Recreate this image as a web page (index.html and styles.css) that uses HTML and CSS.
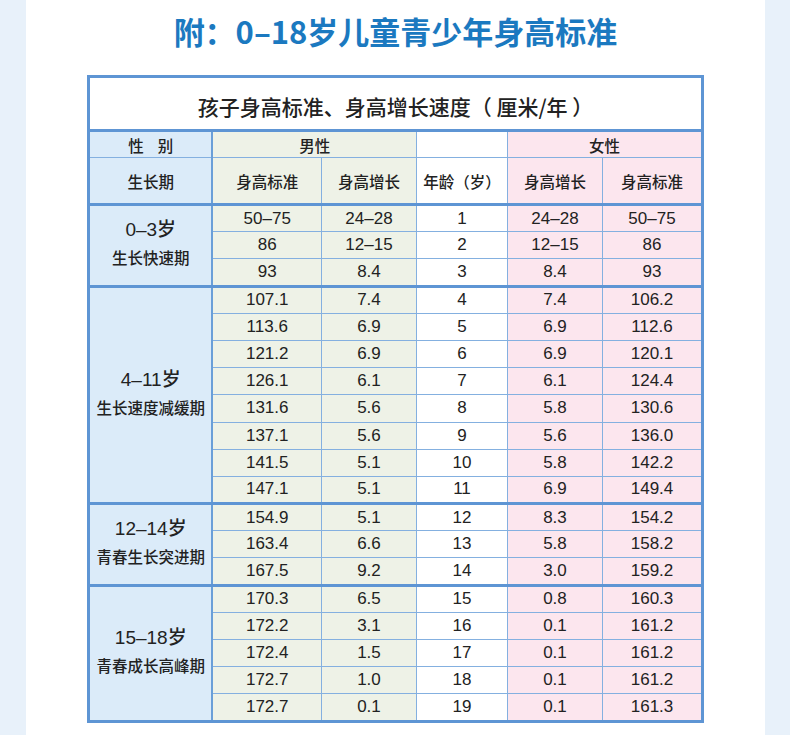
FILE: index.html
```html
<!DOCTYPE html>
<html lang="zh">
<head>
<meta charset="utf-8">
<link rel="stylesheet" href="styles.css">
</head>
<body>
<div class="page">
  <div class="panel">
    <h1 class="title">附：0–18岁儿童青少年身高标准</h1>
    <table class="grid">
      <colgroup>
        <col class="c1"><col class="c2"><col class="c3"><col class="c4"><col class="c5"><col class="c6">
      </colgroup>
      <tr class="cap-row"><td colspan="6" class="cap">孩子身高标准、身高增长速度（ 厘米/年 ）</td></tr>
      <tr class="h1-row">
        <td class="lab hd">性&nbsp;&nbsp;&nbsp;&nbsp;别</td>
        <td colspan="2" class="m hd">男性</td>
        <td class="a"></td>
        <td colspan="2" class="f hd">女性</td>
      </tr>
      <tr class="h2-row">
        <td class="lab hd">生长期</td>
        <td class="m hd">身高标准</td>
        <td class="m hd">身高增长</td>
        <td class="a hd">年龄（岁）</td>
        <td class="f hd">身高增长</td>
        <td class="f hd">身高标准</td>
      </tr>

      <tr class="d grp">
        <td rowspan="3" class="lab grpl"><div class="yr">0–3岁</div><div class="sub">生长快速期</div></td>
        <td class="m">50–75</td><td class="m">24–28</td><td class="a">1</td><td class="f">24–28</td><td class="f">50–75</td>
      </tr>
      <tr class="d"><td class="m">86</td><td class="m">12–15</td><td class="a">2</td><td class="f">12–15</td><td class="f">86</td></tr>
      <tr class="d"><td class="m">93</td><td class="m">8.4</td><td class="a">3</td><td class="f">8.4</td><td class="f">93</td></tr>

      <tr class="d grp">
        <td rowspan="8" class="lab grpl"><div class="yr">4–11岁</div><div class="sub">生长速度减缓期</div></td>
        <td class="m">107.1</td><td class="m">7.4</td><td class="a">4</td><td class="f">7.4</td><td class="f">106.2</td>
      </tr>
      <tr class="d"><td class="m">113.6</td><td class="m">6.9</td><td class="a">5</td><td class="f">6.9</td><td class="f">112.6</td></tr>
      <tr class="d"><td class="m">121.2</td><td class="m">6.9</td><td class="a">6</td><td class="f">6.9</td><td class="f">120.1</td></tr>
      <tr class="d"><td class="m">126.1</td><td class="m">6.1</td><td class="a">7</td><td class="f">6.1</td><td class="f">124.4</td></tr>
      <tr class="d"><td class="m">131.6</td><td class="m">5.6</td><td class="a">8</td><td class="f">5.8</td><td class="f">130.6</td></tr>
      <tr class="d"><td class="m">137.1</td><td class="m">5.6</td><td class="a">9</td><td class="f">5.6</td><td class="f">136.0</td></tr>
      <tr class="d"><td class="m">141.5</td><td class="m">5.1</td><td class="a">10</td><td class="f">5.8</td><td class="f">142.2</td></tr>
      <tr class="d"><td class="m">147.1</td><td class="m">5.1</td><td class="a">11</td><td class="f">6.9</td><td class="f">149.4</td></tr>

      <tr class="d grp">
        <td rowspan="3" class="lab grpl"><div class="yr">12–14岁</div><div class="sub">青春生长突进期</div></td>
        <td class="m">154.9</td><td class="m">5.1</td><td class="a">12</td><td class="f">8.3</td><td class="f">154.2</td>
      </tr>
      <tr class="d"><td class="m">163.4</td><td class="m">6.6</td><td class="a">13</td><td class="f">5.8</td><td class="f">158.2</td></tr>
      <tr class="d"><td class="m">167.5</td><td class="m">9.2</td><td class="a">14</td><td class="f">3.0</td><td class="f">159.2</td></tr>

      <tr class="d grp">
        <td rowspan="5" class="lab grpl"><div class="yr">15–18岁</div><div class="sub">青春成长高峰期</div></td>
        <td class="m">170.3</td><td class="m">6.5</td><td class="a">15</td><td class="f">0.8</td><td class="f">160.3</td>
      </tr>
      <tr class="d"><td class="m">172.2</td><td class="m">3.1</td><td class="a">16</td><td class="f">0.1</td><td class="f">161.2</td></tr>
      <tr class="d"><td class="m">172.4</td><td class="m">1.5</td><td class="a">17</td><td class="f">0.1</td><td class="f">161.2</td></tr>
      <tr class="d"><td class="m">172.7</td><td class="m">1.0</td><td class="a">18</td><td class="f">0.1</td><td class="f">161.2</td></tr>
      <tr class="d"><td class="m">172.7</td><td class="m">0.1</td><td class="a">19</td><td class="f">0.1</td><td class="f">161.3</td></tr>
    </table>
  </div>
</div>
</body>
</html>
```

FILE: styles.css
```css
* { box-sizing: border-box; }
html, body { margin: 0; padding: 0; }
body {
  background: #e8f1fa;
  font-family: "Liberation Sans", "Noto Sans CJK SC", sans-serif;
  color: #222;
}
.page {
  width: 790px;
  height: 735px;
  overflow: hidden;
  padding-left: 26px;
}
.panel {
  width: 739px;
  height: 735px;
  background: #fff;
  display: flex;
  flex-direction: column;
  align-items: center;
}
.title {
  margin: 13px 0 0;
  height: 62px;
  font-family: "Noto Sans CJK SC", sans-serif;
  font-size: 31px;
  line-height: 36px;
  font-weight: 700;
  color: #1b79c0;
}
.grid {
  width: 614px;
  border-collapse: collapse;
  border: 3px solid #5e95d4;
  table-layout: fixed;
}
.c1 { width: 124px; }
.c2 { width: 109px; }
.c3 { width: 95px; }
.c4 { width: 91px; }
.c5 { width: 95px; }
.c6 { width: 100px; }
.grid td {
  border: 1px solid #84b0e0;
  text-align: center;
  vertical-align: middle;
  padding: 0;
  font-size: 17px;
  line-height: 20px;
}
.cap-row td {
  height: 54px;
  border-bottom: 3px solid #5e95d4;
  background: #fff;
  font-family: "Noto Sans CJK SC", sans-serif;
  font-size: 21px;
  font-weight: 500;
  color: #222;
  padding-top: 4px;
  word-spacing: 0;
}
.h1-row td { height: 27px; }
.h2-row td { height: 47px; }
.hd {
  font-family: "Noto Sans CJK SC", sans-serif;
  font-size: 15.5px !important;
  font-weight: 500;
}
.lab { background: #dbebf9; border-right: 2px solid #6a9fd8 !important; }
.m { background: #eef2e7; }
.a { background: #fff; }
.f { background: #fce6ee; }
.d td { height: 27.2px; }
.grp td { border-top: 3px solid #5e95d4; }
.h2-row td { border-bottom: 3px solid #5e95d4; }
.grpl { padding-bottom: 4px !important; }
.yr {
  font-family: "Liberation Sans", "Noto Sans CJK SC", sans-serif;
  font-size: 19px;
  line-height: 28px;
  font-weight: 500;
}
.sub {
  font-family: "Noto Sans CJK SC", sans-serif;
  font-size: 15.5px;
  line-height: 26px;
  font-weight: 500;
}
```
